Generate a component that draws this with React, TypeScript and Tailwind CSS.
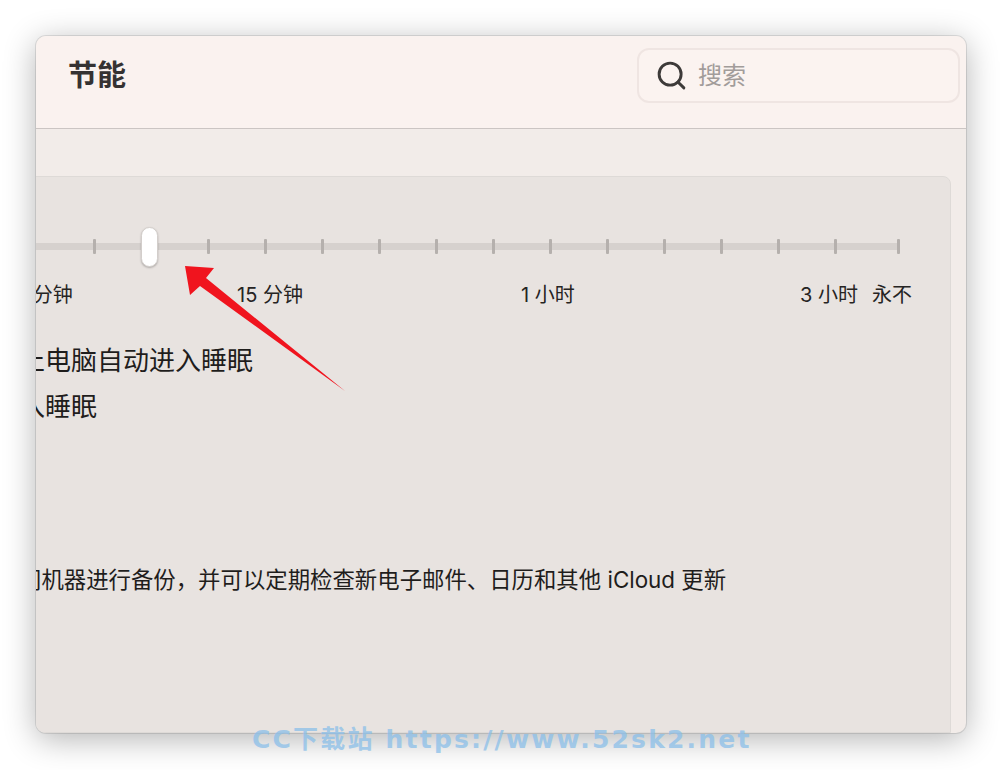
import React from "react";
import { Search } from "lucide-react";

const font = "font-['Inter','Noto_Sans_CJK_SC',sans-serif]";

const ticks = Array.from({ length: 14 }, (_, i) => i);

export default function App() {
  return (
    <div className={`relative w-[1002px] h-[770px] overflow-hidden bg-white pt-[36px] pl-[36px] ${font}`}>
      {/* window */}
      <div className="flex h-[697px] w-[930px] flex-col overflow-hidden rounded-[10px] bg-[#f2ece9] shadow-[0_6px_32px_rgba(0,0,0,0.3)] ring-1 ring-black/10">
        <div className="h-[93px] shrink-0 border-b border-[#cbc5c3] bg-[#faf2ef] pt-[12px] pl-[32px] pr-[6px]">
          <div className="flex h-[55px] items-center justify-between">
            <h1 className="text-[29px] font-bold leading-[36px] text-[#353232]">节能</h1>
            <div className="flex h-[55px] w-[323px] items-center rounded-[12px] border-2 border-[#efe5e2] bg-[#fbf3f0] pl-[16px]">
              <Search size={33} strokeWidth={2.1} className="text-[#3d3a39]" />
              <span className="ml-[10px] text-[24px] leading-[30px] text-[#a29c9a]">搜索</span>
            </div>
          </div>
        </div>

        <div className="flex-1 pt-[47px] pr-[15px]">
          <div className="-ml-[60px] h-full rounded-tr-[8px] border border-[#dedad7] bg-[#e8e3e0] pl-[42px] pt-[66px] text-[#1f1d1c]">
            {/* slider */}
            <div className="relative flex h-[7px] w-[881px] items-center rounded-full bg-[#d6d1ce] pl-[74px]">
              <div className="flex items-center gap-[54px]">
                {ticks.map((t) => (
                  <div key={t} className="h-[15px] w-[3px] rounded-[1px] bg-[#b5b0ad]" />
                ))}
                <div className="ml-[6px] h-[15px] w-[3px] rounded-[1px] bg-[#b5b0ad]" />
              </div>
              <div className="absolute left-[122px] top-1/2 h-[40px] w-[17px] -translate-y-1/2 rounded-full border border-[#d3cecb] bg-white shadow-[0_1px_2px_rgba(0,0,0,0.25)]" />
            </div>

            <div className="mt-[33px] flex text-[20px] leading-[24px] text-[#262423]">
              <div className="w-[53px] whitespace-nowrap text-right">1 分钟</div>
              <div className="ml-[165px] w-[284px] whitespace-nowrap">15 分钟</div>
              <div className="w-[279px] whitespace-nowrap">1 小时</div>
              <div className="w-[72px] whitespace-nowrap">3 小时</div>
              <div className="whitespace-nowrap">永不</div>
            </div>

            <p className="mt-[38px] whitespace-nowrap text-[26px] leading-[32px]">止电脑自动进入睡眠</p>
            <p className="mt-[14px] whitespace-nowrap text-[26px] leading-[32px]">入睡眠</p>

            <p className="mt-[142px] whitespace-nowrap text-[22.4px] leading-[30px]">
              间机器进行备份，并可以定期检查新电子邮件、日历和其他 iCloud 更新
            </p>
          </div>
        </div>
      </div>

      {/* red annotation arrow */}
      <svg className="pointer-events-none absolute left-0 top-0" width="1002" height="770">
        <polygon points="185,266 214,268 206,278 345,391 200,286 190,295" fill="#f0141e" />
      </svg>

      {/* watermark */}
      <div className="pointer-events-none absolute left-[252px] top-[725px] whitespace-nowrap font-['DejaVu_Sans','Noto_Sans_CJK_SC',sans-serif] text-[25px] font-bold leading-[30px] tracking-[2.2px] text-[#8bbfe9] opacity-75">
        CC下载站 https://www.52sk2.net
      </div>
    </div>
  );
}
